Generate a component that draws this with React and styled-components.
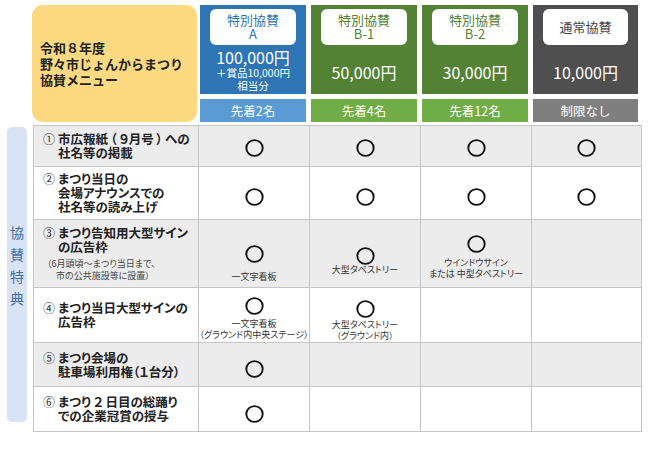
import React from 'react';
import styled, { createGlobalStyle } from 'styled-components';

const GlobalStyle = createGlobalStyle`
  * { box-sizing: border-box; }
  body {
    margin: 0;
    background: #fff;
    color: #222;
    font-family: "Noto Sans CJK JP", "Noto Sans", sans-serif;
  }
`;

const COLS = '165px 111px 111px 111px 110px';
const LINE = '#c6c6c6';

const Page = styled.div`
  width: 650px;
  height: 450px;
  padding: 5px 0 0 7px;
`;

const Header = styled.div`
  display: grid;
  grid-template-columns: ${COLS};
  grid-template-rows: 89px 23px;
  row-gap: 5px;
  margin-left: 27px;
`;

const TitleBox = styled.div`
  grid-row: 1 / span 2;
  margin: 0 2px 0 -2px;
  background: #fdd981;
  border-radius: 11px;
  padding-left: 8px;
  display: flex;
  align-items: center;
  font-size: 13px;
  line-height: 16px;
  font-weight: 700;
  white-space: pre-line;
  color: #222;
`;

const PlanHead = styled.div`
  margin: 0 4px 0 1px;
  background: ${({ dark }) => dark};
  padding: 4px 10px 0;
  display: flex;
  flex-direction: column;
  align-items: center;
`;

const PlanName = styled.div`
  align-self: stretch;
  height: 36px;
  background: #fff;
  border-radius: 6px;
  color: ${({ ink }) => ink};
  font-size: 13px;
  line-height: 14px;
  white-space: pre-line;
  text-align: center;
  display: flex;
  align-items: center;
  justify-content: center;
`;

const PriceBox = styled.div`
  flex: 1;
  padding-top: ${({ top }) => top || '4px'};
  display: flex;
  flex-direction: column;
  align-items: center;
  justify-content: center;
  color: #fff;
`;

const Price = styled.div`
  font-size: 16px;
  line-height: 18px;
`;

const PriceNote = styled.div`
  font-size: 10.5px;
  line-height: 13px;
  white-space: pre-line;
  text-align: center;
`;

const Limit = styled.div`
  margin: 0 4px 0 1px;
  background: ${({ light }) => light};
  color: #fff;
  font-size: 12.5px;
  display: flex;
  align-items: center;
  justify-content: center;
`;

const Body = styled.div`
  display: flex;
  align-items: flex-start;
  column-gap: 6px;
  margin-top: 3px;
`;

const SideLabel = styled.div`
  width: 20px;
  height: 295px;
  margin-top: 2px;
  border-radius: 5px;
  background: #dae3f3;
  color: #3e6ca8;
  font-size: 14px;
  line-height: 22px;
  padding-bottom: 19px;
  white-space: pre-line;
  text-align: center;
  display: flex;
  align-items: center;
  justify-content: center;
`;

const Table = styled.div`
  border-top: 1px solid ${LINE};
  border-left: 1px solid ${LINE};
`;

const Row = styled.div`
  display: grid;
  grid-template-columns: ${COLS};
  height: ${({ h }) => h}px;
  background: ${({ shade }) => (shade ? '#ececec' : '#fff')};
`;

const Cell = styled.div`
  border-right: 1px solid ${LINE};
  border-bottom: 1px solid ${LINE};
  display: flex;
  flex-direction: column;
  align-items: center;
  padding-top: ${({ top }) => top || 0}px;
`;

const ItemCell = styled(Cell)`
  align-items: flex-start;
  justify-content: center;
  padding-left: 9px;
`;

const ItemLine = styled.div`
  display: flex;
  align-items: flex-start;
`;

const Num = styled.span`
  width: 15px;
  font-size: 12px;
  line-height: 14px;
  color: #333;
`;

const ItemTitle = styled.div`
  font-size: 12.5px;
  line-height: 14px;
  font-weight: 700;
  font-feature-settings: "palt";
  white-space: pre;
  color: #222;
`;

const ItemNote = styled.div`
  margin-top: 4px;
  padding-left: 4px;
  font-size: 9px;
  line-height: 12px;
  font-feature-settings: "palt";
  white-space: pre;
  color: #444;
`;

const Caption = styled.div`
  margin-top: ${({ gap }) => gap || 0}px;
  font-size: 9px;
  line-height: 10.5px;
  font-feature-settings: "palt";
  white-space: pre;
  color: #333;
  text-align: center;
`;

const Mark = () => (
  <svg width="19" height="18" viewBox="0 0 19 18">
    <ellipse cx="9.5" cy="9" rx="8.2" ry="7.9" fill="none" stroke="#111" strokeWidth="1.9" />
  </svg>
);

const plans = [
  { key: 'a', name: '特別協賛\nA', price: '100,000円', note: '＋賞品10,000円\n相当分', limit: '先着2名', dark: '#2e75b6', light: '#5b9bd5', ink: '#2e75b6' },
  { key: 'b1', name: '特別協賛\nB-1', price: '50,000円', limit: '先着4名', dark: '#548235', light: '#70ad47', ink: '#548235' },
  { key: 'b2', name: '特別協賛\nB-2', price: '30,000円', limit: '先着12名', dark: '#548235', light: '#70ad47', ink: '#548235' },
  { key: 'n', name: '通常協賛', price: '10,000円', limit: '制限なし', dark: '#4f4f4f', light: '#7f7f7f', ink: '#444' },
];

// palt narrows the kana; thin spaces give the brackets back some air
const rows = [
  {
    num: '①', h: 41, shade: true,
    title: '市広報紙\u2009（\u2009９月号\u2009）\u2009への\n社名等の掲載',
    marks: [{ top: 13 }, { top: 13 }, { top: 13 }, { top: 13 }],
  },
  {
    num: '②', h: 53,
    title: 'まつり当日の\n会場アナウンスでの\n社名等の読み上げ',
    marks: [{ top: 21 }, { top: 21 }, { top: 21 }, { top: 21 }],
  },
  {
    num: '③', h: 68, shade: true,
    title: 'まつり告知用大型サイン\nの広告枠',
    note: '（6月頭頃～まつり当日まで、\n　市の公共施設等に設置）',
    marks: [
      { top: 25, gap: 9, caption: '一文字看板' },
      { top: 27, gap: 0, caption: '大型タペストリー' },
      { top: 15, gap: 5, caption: 'ウインドウサイン\nまたは 中型タペストリー' },
      null,
    ],
  },
  {
    num: '④', h: 55,
    title: 'まつり当日大型サインの\n広告枠',
    marks: [
      { top: 9, gap: 4, caption: '一文字看板\n（グラウンド内中央ステージ）' },
      { top: 12, gap: 2, caption: '大型タペストリー\n（グラウンド内）' },
      null,
      null,
    ],
  },
  {
    num: '⑤', h: 44, shade: true,
    title: 'まつり会場の\n駐車場利用権（１台分）',
    marks: [{ top: 17 }, null, null, null],
  },
  {
    num: '⑥', h: 45,
    title: 'まつり\u2009２\u2009日目の総踊り\nでの企業冠賞の授与',
    marks: [{ top: 18 }, null, null, null],
  },
];

const App = () => (
  <Page>
    <GlobalStyle />
    <Header>
      <TitleBox>{'令和８年度\n野々市じょんからまつり\n協賛メニュー'}</TitleBox>
      {plans.map(p => (
        <PlanHead key={p.key} dark={p.dark}>
          <PlanName ink={p.ink}>{p.name}</PlanName>
          <PriceBox top={p.note ? '1px' : '4px'}>
            <Price>{p.price}</Price>
            {p.note && <PriceNote>{p.note}</PriceNote>}
          </PriceBox>
        </PlanHead>
      ))}
      {plans.map(p => (
        <Limit key={p.key} light={p.light}>{p.limit}</Limit>
      ))}
    </Header>

    <Body>
      <SideLabel>{'協\n賛\n特\n典'}</SideLabel>
      <Table>
        {rows.map(r => (
          <Row key={r.num} h={r.h} shade={r.shade}>
            <ItemCell>
              <ItemLine>
                <Num>{r.num}</Num>
                <ItemTitle>{r.title}</ItemTitle>
              </ItemLine>
              {r.note && <ItemNote>{r.note}</ItemNote>}
            </ItemCell>
            {r.marks.map((m, i) => (
              <Cell key={i} top={m ? m.top : 0}>
                {m && <Mark />}
                {m && m.caption && <Caption gap={m.gap}>{m.caption}</Caption>}
              </Cell>
            ))}
          </Row>
        ))}
      </Table>
    </Body>
  </Page>
);

export default App;
